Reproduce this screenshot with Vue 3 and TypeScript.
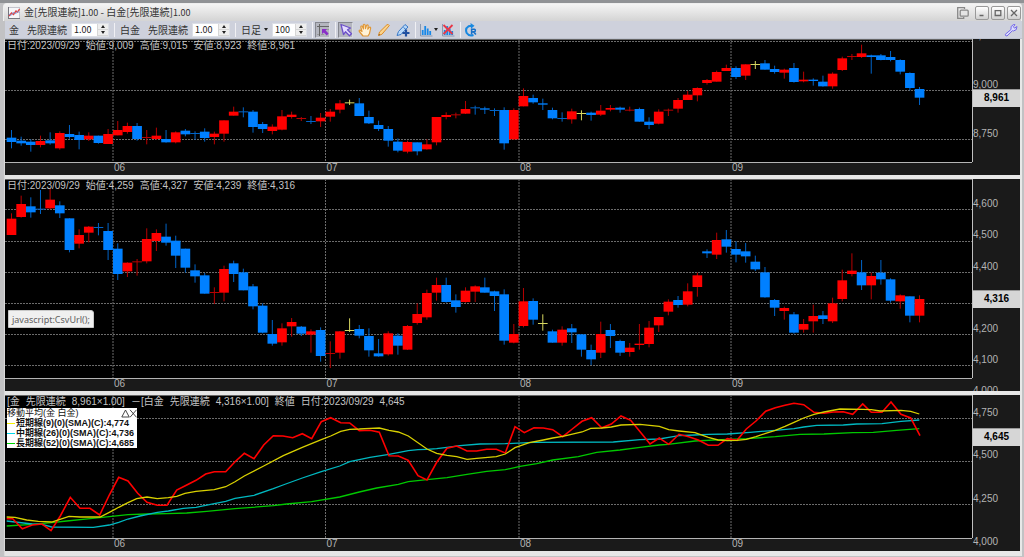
<script setup lang="ts">
import { ref } from 'vue'

type Kind = 'R' | 'B' | 'Y'
interface Candle { x: number; kind: Kind; top: number; bottom: number; high: number; low: number }
interface Label { text: string; y: number }

const FIRST_X = 11.5
const STEP = 9.66
const UNIT = 3

// Each block is an origin and "kind top bottom high low" rows, in thirds of a plot unit.
function candles(blocks: [number, string][]): Candle[] {
  const out: Candle[] = []
  for (const [origin, rows] of blocks) {
    for (const row of rows.trim().split(/\s*;\s*/)) {
      const [kind, ...v] = row.split(' ')
      const [top, bottom, high, low] = v.map((n) => origin + Number(n) / UNIT)
      out.push({ x: FIRST_X + STEP * out.length, kind: kind as Kind, top, bottom, high, low })
    }
  }
  return out
}

function trace(blocks: [number, number, string][]): string {
  return blocks
    .flatMap(([ox, oy, pts]) =>
      pts.split(' ').map((p) => {
        const [u, v] = p.split(',').map(Number)
        return `${(ox + u / UNIT).toFixed(1)},${(oy + v / UNIT).toFixed(1)}`
      }),
    )
    .join(' ')
}

const gold = candles([
  [90, 'B 143 156 120 175;B 152 160 140 167;B 155 165 148 185;R 153 165 137 172;B 151 160 127 164;R 129 175 124 179;B 132 141 105 146;B 135 150 125 178;R 137 148 127 153;B 137 159 137 161;R 132 162 117 162;R 120 136 93 136;R 108 126 98 131;B 108 147 99 152;R 141 143 120 163;R 137 147 113 150;B 147 157 120 158;R 127 157 124 160;B 122 133 117 139;B 129 131 124 149;B 125 144 115 155;R 131 141 125 163;R 91 131 91 155;R 65 77 50 77;B 64 66 52 82;B 65 111 60 128;B 102 117 96 129;R 110 123 103 133;R 79 119 60 121;R 74 81 65 86;R 84 86 81 93;B 93 95 78 102;R 83 94 69 111;R 65 80 57 95'],
  [80, 'R 70 89 60 100;Y 67 69 59 75;B 70 108 54 108;B 111 130 92 132;B 135 147 122 153;B 147 182 138 200;B 185 212 175 217;R 186 215 182 220;B 187 214 187 226;R 193 208 178 209;R 111 187 111 196;R 105 111 97 118;R 103 105 98 115;R 87 101 63 102;B 82 84 77 104;B 85 89 80 102;B 90 92 85 108;B 90 190 82 209;R 90 178 85 180;R 48 79 25 79;B 54 67 44 71;B 70 74 56 90;B 90 115 83 118;B 114 116 97 125;R 94 118 86 131;Y 99 101 91 121;B 98 105 95 122;R 92 104 75 108;R 84 89 75 94;B 83 89 80 98;R 89 91 80 94;B 87 125 83 125;B 125 135 112 147;R 95 131 88 133'],
  [38, 'R 215 217 212 234;R 186 212 180 224;R 170 186 159 186;R 150 172 148 190;R 126 135 123 140;R 102 131 98 131;R 90 99 80 99;B 90 117 85 123;R 79 113 79 126;Y 78 80 69 93;B 76 95 66 95;B 93 102 83 107;R 95 104 92 122;B 90 132 75 134;R 125 130 101 133;B 125 129 121 143;B 131 145 113 146;R 107 145 103 152;R 61 96 56 99;R 54 56 48 66;R 46 57 20 60;B 52 57 50 107;B 52 66 48 67;B 57 66 39 70;B 66 101 64 109;B 105 150 103 157;B 153 179 147 201'],
])

const platinum = candles([
  [175, 'R 131 180 115 180;R 87 126 62 128;B 94 112 67 128;B 101 103 45 117;R 74 100 40 103;B 91 115 79 129;B 130 225 130 232;R 180 206 163 220;R 155 173 153 202;B 156 158 144 181;B 168 225 144 255;B 221 297 205 315;R 263 289 262 306;R 259 261 252 302;R 192 259 160 265;R 174 198 163 228;B 185 203 146 212;B 197 242 182 279;B 221 278 221 293;B 286 304 268 323;B 301 356 294 356;R 351 353 337 387;R 282 353 272 379;B 265 297 257 321;B 292 346 281 346;B 334 394 327 403;B 392 473 385 475;B 477 506 435 512;R 460 502 445 512;R 441 454 429 485;B 455 476 453 483;R 469 479 463 533;B 465 543 457 560;R 534 536 499 579'],
  [260, 'R 214 278 213 296;Y 210 212 175 216;B 207 227 195 235;B 228 271 205 290;B 280 289 237 290;R 220 283 214 287;B 227 257 220 284;R 198 269 195 270;R 162 189 130 194;R 99 172 89 179;R 75 98 53 122;B 75 126 53 128;B 121 141 103 158;R 92 126 82 128;R 79 95 76 126;B 82 98 53 98;B 94 108 92 153;B 103 242 88 254;R 222 248 192 250;R 124 198 84 202;B 123 179 115 194;Y 189 191 163 212;B 214 248 209 248;R 209 248 199 257;B 205 217 192 249;B 223 269 222 290;B 270 298 254 315;R 222 278 185 294;B 210 228 192 264;B 243 278 239 288;R 263 276 249 290;R 251 255 192 269;R 203 252 183 262;R 171 196 171 216'],
  [220, 'R 245 275 238 286;B 240 255 228 263;R 214 254 190 259;R 166 201 158 230;B 94 100 88 114;R 60 104 38 117;B 58 80 30 98;B 87 104 64 127;B 94 109 69 128;B 125 148 107 153;B 157 232 141 233;B 240 263 237 288;R 264 273 260 299;B 283 338 276 341;R 312 329 297 338;R 288 304 254 338;B 286 297 273 312;R 250 304 233 309;R 181 237 149 244;R 152 162 100 169;B 157 196 120 210;R 168 196 158 238;B 158 178 120 194;B 178 242 175 248;R 226 244 223 266;B 229 287 229 307;R 237 287 226 307'],
])

const spreadLines = [
  { cls: 'long', points: trace([
    [0, 390, '20,408 97,403 155,398 200,393 270,386 328,380 384,374 441,372 500,371 560,369 620,364 705,356 820,347 860,342 935,335 1019,321'],
    [320, 390, '118,306 170,294 235,283 265,275 321,269 381,263 441,253 500,244 556,239 600,229 650,221 698,210 775,200 830,187 900,180 960,172 1018,165 1044,163'],
    [640, 390, '165,153 262,148 320,146 406,140 480,133 552,132 638,128 700,127 770,121 838,116'],
  ]) },
  { cls: 'mid', points: trace([
    [0, 390, '20,393 45,396 97,402 126,403 155,411 280,412 328,405 356,397 384,387 420,378 472,367 505,363 550,355 588,352 643,341 677,334 705,325 762,316 820,296 849,285 907,264 964,245 1019,228'],
    [320, 390, '89,215 150,202 207,193 265,182 294,179 321,178 350,176 381,172 420,167 480,162 556,161 640,157 880,156 960,149 1018,147'],
    [640, 390, '86,142 117,137 165,135 205,133 262,132 330,127 406,121 462,116 491,111 530,106 610,105 650,102 726,101 783,94 838,90'],
  ]) },
  { cls: 'price', points: trace([
    [0, 390, '20,386 38,386 67,416 97,405 126,402 153,422 181,378 211,322 240,355 270,355 299,375 328,315 356,262 384,273 413,310 441,337 472,346 501,346 530,300 559,286 588,271 617,252 643,245 677,245 705,215 733,190 762,206 791,165 820,137 849,138 878,143 907,131 935,146 964,95 992,83'],
    [320, 390, '62,98 89,99 118,122 150,121 178,127 207,197 235,198 265,211 294,257 321,270 350,217 381,175 410,168 441,183 470,183 500,178 529,178 556,189 585,110 613,128 642,113 670,114 698,119 728,140 757,117 786,94 815,83 845,113 874,102 903,78 932,91 961,126 990,162 1018,144 1046,163'],
    [640, 390, '117,133 146,140 175,150 205,166 234,166 262,146 291,151 319,117 348,93 377,64 406,53 435,46 462,40 491,44 522,67 552,70 580,66 610,65 638,73 668,42 694,67 726,67 753,36 783,73 812,84 840,137'],
  ]) },
  { cls: 'short', points: trace([
    [0, 390, '20,381 45,382 80,390 115,394 155,396 180,388 207,379 240,381 300,381 328,367 356,352 384,338 410,326 441,321 472,326 505,323 530,319 555,310 588,304 643,299 677,290 705,275 733,258 791,228 850,197 907,172 964,149 992,138'],
    [320, 390, '62,124 89,118 118,117 150,115 178,114 207,121 235,126 265,138 321,177 350,190 381,196 410,200 441,208 470,205 529,200 556,192 585,173 628,158 670,150 698,144 728,139 786,126 812,115 845,114 874,111 903,105 960,103 1018,109'],
    [640, 390, '86,119 117,123 165,128 205,142 234,150 262,152 291,151 319,148 348,140 377,130 406,121 435,109 462,97 491,84 522,73 552,66 600,57 668,58 694,59 720,63 783,61 812,64 838,72'],
  ]) },
]

const LEFT = 5
const WIDTH = 967
const months = [
  { text: '06', x: 113 },
  { text: '07', x: 325.5 },
  { text: '08', x: 519 },
  { text: '09', x: 731 },
]

interface Pane {
  id: string; top: number; plot: number; grid: number[]; labels: Label[]
  last: Label; info: string[]; candles: Candle[]
}
const panes: Pane[] = [
  {
    id: 'gold', top: 39, plot: 123, grid: [41.5, 90.5, 139.5],
    labels: [{ text: '9,250', y: 36 }, { text: '9,000', y: 85 }, { text: '8,750', y: 134 }],
    last: { text: '8,961', y: 98 },
    info: ['日付:2023/09/29', '始値:9,009', '高値:9,015', '安値:8,923', '終値:8,961'],
    candles: gold,
  },
  {
    id: 'platinum', top: 179, plot: 199, grid: [209.5, 241.5, 272.5, 303.5, 334.5, 365.5],
    labels: [{ text: '4,600', y: 204 }, { text: '4,500', y: 235 }, { text: '4,400', y: 267 }, { text: '4,200', y: 329 }, { text: '4,100', y: 360 }, { text: '4,000', y: 391 }],
    last: { text: '4,316', y: 299 },
    info: ['日付:2023/09/29', '始値:4,259', '高値:4,327', '安値:4,239', '終値:4,316'],
    candles: platinum,
  },
  {
    id: 'spread', top: 395, plot: 143, grid: [418.5, 461.5, 504.5],
    labels: [{ text: '4,750', y: 413 }, { text: '4,500', y: 455 }, { text: '4,250', y: 499 }, { text: '4,000', y: 542 }],
    last: { text: '4,645', y: 437 },
    info: ['[金', '先限連続', '8,961×1.00]', '－[白金', '先限連続', '4,316×1.00]', '終値', '日付:2023/09/29', '4,645'],
    candles: [],
  },
]
const AXIS = 13
const pct = (p: Pane, y: number) => `${((y - p.top) / (p.plot + AXIS)) * 100}%`
const color: Record<Kind, string> = { R: '#ff0000', B: '#0080ff', Y: '#d8d860' }
const wick: Record<Kind, string> = { R: '#b80000', B: '#0064c8', Y: '#d8d860' }

const legend = [
  { cls: 'short', text: '短期線(9)(0)(SMA)(C):4,774' },
  { cls: 'mid', text: '中期線(26)(0)(SMA)(C):4,736' },
  { cls: 'long', text: '長期線(52)(0)(SMA)(C):4,685' },
]

const goldRatio = ref('1.00')
const platinumRatio = ref('1.00')
const bars = ref('100')
function step(target: 'gold' | 'platinum' | 'bars', d: number) {
  if (target === 'bars') bars.value = String(Math.max(10, Number(bars.value) + d * 10))
  else {
    const r = target === 'gold' ? goldRatio : platinumRatio
    r.value = Math.max(0, Number(r.value) + d * 0.01).toFixed(2)
  }
}
</script>

<template>
  <div class="window">
    <header class="titlebar">
      <svg class="app-icon" viewBox="0 0 12 12" aria-hidden="true">
        <rect x="0.5" y="0.5" width="11" height="11" fill="#f6f6f8" stroke="#c4c4cc" />
        <path d="M0.5 0v12M0 11.5h12" stroke="#77777f" />
        <path d="M1 9l2.5-3 2 1.5L8 4l1.5 1 2-3" fill="none" stroke="#e04444" stroke-width="1.3" />
        <path d="M1 7l2 1.5 2.5-3.5 2 2 2-2.5 2 1" fill="none" stroke="#6f8fd8" stroke-width="0.8" />
      </svg>
      <h1>金[先限連続]<small>1.00</small> - 白金[先限連続]<small>1.00</small></h1>
      <button class="popout" type="button" aria-label="別ウィンドウ">
        <svg viewBox="0 0 12 12"><path d="M7.5 2V.7H.7v10.6h6V10" fill="none" stroke="#888" stroke-width="1.3" /><rect x="3.2" y="3.2" width="8" height="6" rx="1" fill="#e4e4e4" stroke="#888" stroke-width="1.3" /></svg>
      </button>
      <div class="winbtns">
        <button type="button" aria-label="最小化"><svg viewBox="0 0 8 8"><path d="M1.5 6.5h4" stroke="#666" stroke-width="1.5" /></svg></button>
        <button type="button" aria-label="最大化"><svg viewBox="0 0 8 8"><path d="M1.2 1.7h5.6v4.8H1.2z" fill="none" stroke="#666" stroke-width="1.3" /></svg></button>
        <button type="button" aria-label="閉じる"><svg viewBox="0 0 8 8"><path d="M1 1l6 6M7 1L1 7" stroke="#666" stroke-width="1.3" /></svg></button>
      </div>
    </header>

    <div class="toolbar" role="toolbar">
      <div class="group">
        <label class="pair" for="gold-ratio"><span>金</span><span>先限連続</span></label>
        <div class="spin">
          <input id="gold-ratio" v-model="goldRatio" type="text" />
          <span class="arrows">
            <button type="button" aria-label="増やす" @click="step('gold', 1)"><i class="up"></i></button>
            <button type="button" aria-label="減らす" @click="step('gold', -1)"><i class="down"></i></button>
          </span>
        </div>
      </div>
      <div class="group">
        <label class="pair" for="platinum-ratio"><span>白金</span><span>先限連続</span></label>
        <div class="spin">
          <input id="platinum-ratio" v-model="platinumRatio" type="text" />
          <span class="arrows">
            <button type="button" aria-label="増やす" @click="step('platinum', 1)"><i class="up"></i></button>
            <button type="button" aria-label="減らす" @click="step('platinum', -1)"><i class="down"></i></button>
          </span>
        </div>
      </div>
      <div class="group">
        <button class="period" type="button">日足<i class="down"></i></button>
        <div class="spin count">
          <input v-model="bars" type="text" aria-label="本数" />
          <span class="arrows">
            <button type="button" aria-label="増やす" @click="step('bars', 1)"><i class="up"></i></button>
            <button type="button" aria-label="減らす" @click="step('bars', -1)"><i class="down"></i></button>
          </span>
        </div>
      </div>
      <div class="group icons">
        <button class="tool on" type="button" aria-label="クロスライン">
          <svg viewBox="0 0 14 14"><path d="M3.5 1v12M1 3.5h12" stroke="#666" /><path d="M1 11.5h2M5 11.5h3M9 6.500h4" stroke="#999" /><path d="M6 6h5L9.600 7.600l3 3-1.800 1.800-3-3L6 11z" fill="#8a2fc8" /></svg>
        </button>
      </div>
      <div class="group icons">
        <button class="tool on" type="button" aria-label="選択">
          <svg viewBox="0 0 14 14"><path d="M2 1.500l9.500 3.500-3 1.800 4 4-2 2-4-4L4.500 11.500z" fill="#e4dcff" stroke="#6c50c8" stroke-width="1.300" stroke-linejoin="round" /></svg>
        </button>
        <button class="tool" type="button" aria-label="移動">
          <svg viewBox="0 0 14 14"><path d="M5 13L1.300 8.500Q.8 7 2.200 7.200L4 8.500 2.800 4Q3 2.500 4.300 3.300L5.500 6 5.300 2Q6 .6 7 1.800L7.500 5.600 8.500 2.300Q9.500 1.200 10.200 2.600L9.800 6.200 11.300 4.300Q12.700 3.900 12.600 5.300L11.500 10.500 10 13z" fill="#fff3d8" stroke="#e09838" stroke-width="1.200" stroke-linejoin="round" /></svg>
        </button>
        <button class="tool" type="button" aria-label="鉛筆">
          <svg viewBox="0 0 14 14"><path d="M1.500 12.500l1-3.500L10 1.700q1.600-.6 2.300.9L4.900 11.300z" fill="#fbd48c" stroke="#dc8c28" stroke-width="1" stroke-linejoin="round" /><path d="M1.500 12.500l.5-1.600 1.200 1z" fill="#704818" /></svg>
        </button>
        <button class="tool" type="button" aria-label="描画追加">
          <svg viewBox="0 0 14 14"><path d="M1 12.500l1.500-4L9 1.500l3 2.500-7 7.500z" fill="#b8d8f8" stroke="#3878c8" stroke-width="1" stroke-linejoin="round" /><path d="M7.500 4.500l2.500 2" stroke="#3878c8" /><path d="M10 6.500v7M6.500 10h7" stroke="#2050a0" stroke-width="2.200" /></svg>
        </button>
      </div>
      <div class="group icons charts">
        <button class="tool wide" type="button" aria-label="テクニカル">
          <svg viewBox="0 0 14 14"><path d="M1.500 1v12h12" fill="none" stroke="#8898b0" /><path d="M3.700 12V7M6.200 12V3M8.700 12V5.500M11.200 12V8" stroke="#1888e8" stroke-width="1.800" /></svg>
          <i class="down"></i>
        </button>
        <button class="tool" type="button" aria-label="テクニカル削除">
          <svg viewBox="0 0 14 14"><path d="M1.500 1v12h12" fill="none" stroke="#8898b0" /><path d="M3.700 12V7M6.200 12V3M8.700 12V5.500M11.200 12V8" stroke="#1888e8" stroke-width="1.800" /><path d="M2.500 2l9 9M11.500 2l-9 9" stroke="#e83848" stroke-width="1.800" /></svg>
        </button>
      </div>
      <div class="group icons">
        <button class="tool" type="button" aria-label="更新">
          <svg viewBox="0 0 14 14"><path d="M9.500 12Q5 13.500 2.700 10 .8 5.500 4.500 3.300L8 2.800" fill="none" stroke="#1888e0" stroke-width="2" /><path d="M6.500 0L10.500 2.800 7 5.800z" fill="#1888e0" /><path d="M7.600 11.500V6.200H10.300Q12 6.800 11 8.500L7.800 8.900M9.700 9l2.200 2.600" fill="none" stroke="#1870c8" stroke-width="1.500" /></svg>
        </button>
      </div>
      <button class="tool wrench" type="button" aria-label="設定">
        <svg viewBox="0 0 14 14"><path d="M1.300 11.300L7 6.500Q6 3 9.500 1.500L11 1.700 9.300 3.700 10.600 5.200 13 3.500Q13.200 7.500 9.500 8L8.400 7.700 3 13Q1 13 1.300 11.300z" fill="#dcdcff" stroke="#7468e8" stroke-width="1" stroke-linejoin="round" /></svg>
      </button>
    </div>

    <main class="panes">
      <section
        v-for="p in panes" :key="p.id" class="pane"
        :style="{ flexGrow: p.plot + AXIS }"
      >
        <div class="main">
          <svg class="plot" :viewBox="`${LEFT} ${p.top} ${WIDTH} ${p.plot}`" preserveAspectRatio="none">
            <g class="grid">
              <line v-for="y in p.grid" :key="y" :x1="LEFT" :x2="LEFT + WIDTH" :y1="y" :y2="y" />
              <line v-for="m in months" :key="m.text" :x1="m.x" :x2="m.x" :y1="p.top" :y2="p.top + p.plot" />
            </g>
            <g v-for="(c, i) in p.candles" :key="i">
              <line :x1="c.x" :x2="c.x" :y1="c.high" :y2="c.low" :stroke="wick[c.kind]" />
              <rect :x="c.x - STEP / 2" :y="c.top" :width="STEP" :height="Math.max(1, c.bottom - c.top)" :fill="c.bottom - c.top < 1 ? wick[c.kind] : color[c.kind]" />
            </g>
            <template v-if="p.id === 'spread'">
              <polyline v-for="l in spreadLines" :key="l.cls" :class="['trace', l.cls]" :points="l.points" />
            </template>
          </svg>
          <div class="xaxis">
            <span v-for="m in months" :key="m.text" :style="{ left: `${((m.x + 1 - LEFT) / WIDTH) * 100}%` }">{{ m.text }}</span>
          </div>
          <p class="info"><span v-for="(t, i) in p.info" :key="i">{{ t }}</span></p>
          <div v-if="p.id === 'spread'" class="legend">
            <div class="legend-head">
              <span>移動平均(金 白金)</span>
              <svg viewBox="0 0 16 9"><path d="M.8 8L4.500 1l3.700 7zM9 .8l6.500 7.500M15.500.8L9 8.300" fill="none" stroke="#333" stroke-width="0.900" /></svg>
            </div>
            <div v-for="l in legend" :key="l.cls" class="legend-row"><i :class="l.cls"></i>{{ l.text }}</div>
          </div>
          <div v-if="p.id === 'platinum'" class="status">javascript:CsvUrl();</div>
        </div>
        <div class="yaxis">
          <span v-for="l in p.labels" :key="l.text" :style="{ top: pct(p, l.y) }">{{ l.text }}</span>
          <strong :style="{ top: pct(p, p.last.y) }">{{ p.last.text }}</strong>
        </div>
      </section>
    </main>
  </div>
</template>

<style>
body { margin: 0; background: #96989b; }
</style>

<style scoped>
* { box-sizing: border-box; }
.window {
  display: flex; flex-direction: column; min-height: 100vh;
  padding: 0 2px 1px 3px; border-top: 3px solid #909295; background: #c2c2c4;
  font: 10px/14px "Noto Sans CJK JP", sans-serif; color: #333;
}
button { padding: 0; border: 0; background: none; font: inherit; color: inherit; }
.titlebar {
  display: flex; align-items: center; height: 18px; padding: 0 0 0 4px;
  background: linear-gradient(#f4f4f4, #e6e6e6 45%, #d4d4d4);
  border: 1px solid #eee; border-bottom: 0; border-radius: 4px 4px 0 0;
}
.app-icon { width: 12px; height: 12px; margin-right: 4px; }
h1 { flex: 1; margin: 0; font: inherit; }
h1 small { font-size: 9px; }
.popout { width: 12px; height: 12px; margin-right: 6px; }
.popout svg { display: block; }
.winbtns { display: flex; gap: 2px; }
.winbtns button {
  display: grid; place-items: center; width: 14px; height: 14px;
  border: 1px solid #999; border-radius: 2px; background: linear-gradient(#fff, #d0d0d0);
}
.winbtns svg { width: 8px; height: 8px; }

.toolbar {
  display: flex; align-items: center; height: 18px; padding: 0 4px;
  margin-left: 2px; background: #ced1dc; border-bottom: 1px solid #bfc4d0;
}
.group { display: flex; align-items: center; }
.group + .group { margin-left: 5px; padding-left: 5px; border-left: 1px solid #f0f0f4; }
.group + .icons { padding-left: 2px; }
.pair { display: flex; gap: 8px; margin-right: 4px; }
.spin { display: flex; width: 38px; height: 14px; background: #fff; border: 1px solid #dcdfe6; }
.spin.count { width: 35px; }
.spin input {
  flex: 1; min-width: 0; width: 0; padding: 0 0 0 2px; border: 0; background: none;
  font: inherit; font-size: 9px; line-height: 12px; color: #222; outline: 0;
}
.arrows { display: flex; flex-direction: column; width: 11px; background: #eee; }
.arrows button { display: grid; place-items: center; height: 6px; border: 1px solid #d6d6d6; border-width: 0 0 1px 1px; }
.up, .down { display: block; width: 0; height: 0; border: 2px solid transparent; }
.up { border-bottom: 3px solid #222; border-top: 0; }
.down { border-top: 3px solid #222; border-bottom: 0; }
.period { display: flex; align-items: center; gap: 3px; margin-right: 4px; }
.tool { display: flex; align-items: center; justify-content: center; width: 15px; height: 16px; }
.tool svg { width: 14px; height: 14px; flex: none; }
.tool.on { background: #b4b6bf; border: 1px solid #85878f; border-right-color: #d8dae0; border-bottom-color: #d8dae0; }
.icons { gap: 4px; }
.charts { gap: 2px; }
.tool.wide { width: 20px; gap: 1px; }
.wrench { margin-left: auto; }

.panes { display: flex; flex: 1; flex-direction: column; gap: 4px; padding: 0 2px 5px 2px; background: linear-gradient(90deg, #b8b8ba, #e4e4e4 2px, #e8e8e8); }
.pane { display: flex; flex-basis: 0; min-height: 0; overflow: hidden; background: #1a1a1a; }
.main { position: relative; display: flex; flex: 1; flex-direction: column; min-width: 0; }
.plot { display: block; flex: 1 1 0; min-height: 0; width: 100%; background: #000; box-shadow: 0 1px #b4b4b4, 1px 0 #c0c0c0, inset 0 1px #666; }
.grid line { stroke: #6c6c6c; stroke-dasharray: 2 1; }
.trace { fill: none; stroke-width: 1.3; }
.trace.price { stroke: #ff0000; stroke-width: 1.6; }
.trace.short { stroke: #d8d000; }
.trace.mid { stroke: #00b8c0; }
.trace.long { stroke: #00c800; }
.xaxis { position: relative; height: 13px; }
.xaxis span { position: absolute; top: 1px; line-height: 10px; }
.xaxis, .yaxis, .info { font-family: "Liberation Sans", "Noto Sans CJK JP", sans-serif; font-size: 10px; color: #b4b4b4; }
.info { position: absolute; top: 1px; left: 2px; display: flex; gap: 6px; margin: 0; line-height: 12px; color: #c4c4c4; white-space: nowrap; }
.yaxis { position: relative; width: 48px; overflow: hidden; }
.yaxis span { position: absolute; left: 1px; line-height: 12px; transform: translateY(-50%); }
.yaxis strong {
  position: absolute; left: 1px; right: 0; height: 18px; line-height: 16px; text-align: center;
  transform: translateY(-50%); background: #d6d6d6; border-top: 1px solid #999; color: #000;
}
.legend {
  position: absolute; top: 13px; left: 2px; width: 130px; background: #fff; color: #111;
  font: 700 9px/10px "Liberation Sans", "Noto Sans CJK JP", sans-serif; white-space: nowrap;
}
.legend-head { display: flex; justify-content: space-between; align-items: center; height: 10px; font-weight: 400; }
.legend-head svg { width: 16px; height: 9px; }
.legend-row { display: flex; align-items: center; gap: 1px; height: 10px; }
.legend-row i { width: 8px; height: 1px; }
i.short { background: #f4f000; }
i.mid { background: #00d8e8; }
i.long { background: #00d800; }
.status {
  position: absolute; left: 3px; bottom: 63px; height: 18px; padding: 0 3px; line-height: 17px;
  border: 1px solid #c8c8c8; border-radius: 0 3px 0 0; background: #f0f0f0; color: #606060;
  font-family: "Noto Sans", sans-serif; font-size: 9px;
}
</style>
